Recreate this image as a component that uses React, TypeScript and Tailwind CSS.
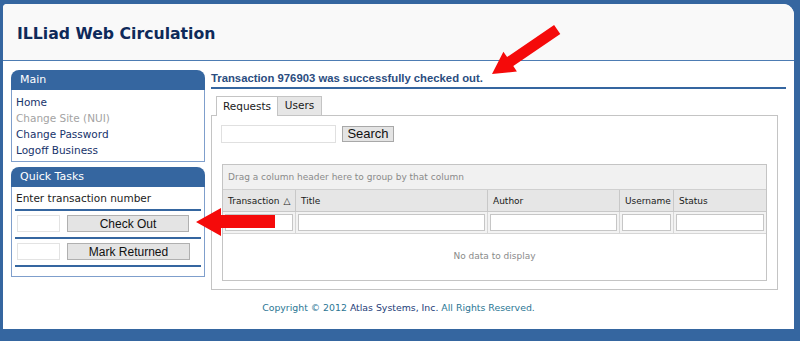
import React from "react";

const verdana = "font-['DejaVu_Sans',Verdana,sans-serif]";
const arial = "font-['Liberation_Sans',Arial,sans-serif]";

const Arrows = () => (
  <svg className="absolute left-0 top-0 pointer-events-none" width="800" height="341" viewBox="0 0 800 341">
    <polygon
      fill="#f50a0a"
      points="492,74 516.9,71.5 513.3,66.1 560.3,33.9 554.1,24.9 507.1,57.1 503.4,51.7"
    />
    <polygon fill="#f50a0a" points="196,222 221,208 221,215 275,215 275,228 221,228 221,236" />
  </svg>
);

const Sidebar = () => (
  <div className="w-[194px] flex flex-col">
    <div className="h-[20px] rounded-t-[8px] bg-[#3566a0] text-white text-[11px] leading-[20px] pl-[9px]">Main</div>
    <div className="border border-t-0 border-[#7f9fcc] pt-[4px] pb-[3px] pl-[4px] text-[10.5px] leading-[16px] text-[#17336b]">
      <div>Home</div>
      <div className="text-[#a3a3a3]">Change Site (NUI)</div>
      <div>Change Password</div>
      <div>Logoff Business</div>
    </div>

    <div className="mt-[5px] h-[20px] rounded-t-[8px] bg-[#3566a0] text-white text-[11px] leading-[20px] pl-[9px]">Quick Tasks</div>
    <div className="border border-t-0 border-[#7f9fcc] pt-[3px] pb-[9px] px-[3px] text-[10.5px] text-[#222]">
      <div className="leading-[16px] pl-[1px]">Enter transaction number</div>
      <div className="mt-[3px] h-[2px] bg-[#3566a0]"></div>
      <div className="flex items-center gap-[7px] mt-[4px] pl-[2px]">
        <div className="w-[43px] h-[17px] border border-[#e3e3e3] bg-white"></div>
        <button className={`${arial} w-[122px] h-[17px] border border-[#b0b0b0] bg-[#e4e4e4] text-[12px] leading-[14px] text-[#111]`}>Check Out</button>
      </div>
      <div className="mt-[5px] h-[2px] bg-[#3566a0]"></div>
      <div className="flex items-center gap-[7px] mt-[4px] pl-[2px]">
        <div className="w-[43px] h-[17px] border border-[#e3e3e3] bg-white"></div>
        <button className={`${arial} w-[123px] h-[17px] border border-[#b0b0b0] bg-[#e4e4e4] text-[12px] leading-[14px] text-[#111]`}>Mark Returned</button>
      </div>
      <div className="mt-[5px] h-[2px] bg-[#3566a0]"></div>
    </div>
  </div>
);

const cols = [
  { name: "Transaction", w: "w-[73px]", sort: true },
  { name: "Title", w: "w-[192px]" },
  { name: "Author", w: "w-[132px]" },
  { name: "Username", w: "w-[54px]" },
  { name: "Status", w: "flex-1" },
];

const Grid = () => (
  <div className="mt-[21px] mx-[10px] border border-[#c4c4c4] bg-white">
    <div className="h-[25px] bg-[#f1f1f1] border-b border-[#d0d0d0] text-[9px] leading-[25px] pl-[5px] text-[#8a8a8a]">
      Drag a column header here to group by that column
    </div>
    <div className="flex h-[22px] bg-[#e6e6e6] border-b border-[#c8c8c8] text-[9px] text-[#1a1a1a]">
      {cols.map((c, i) => (
        <div key={c.name} className={`${c.w} ${i < cols.length - 1 ? "border-r border-[#c8c8c8]" : ""} pl-[5px] leading-[22px] whitespace-nowrap`}>
          {c.name}
          {c.sort && <span className="ml-[4px] text-[9px]">△</span>}
        </div>
      ))}
    </div>
    <div className="flex h-[22px] bg-[#f3f3f3] border-b border-[#d6d6d6]">
      {cols.map((c, i) => (
        <div key={c.name} className={`${c.w} ${i < cols.length - 1 ? "border-r border-[#d6d6d6]" : ""} px-[2px] py-[2px]`}>
          <div className="h-full border border-[#c6c6c6] bg-white"></div>
        </div>
      ))}
    </div>
    <div className="h-[46px] flex items-center justify-center text-[9px] text-[#8a8a8a]">No data to display</div>
  </div>
);

const Content = () => (
  <div className="w-[575px]">
    <div className={`${arial} font-bold text-[11.3px] leading-[16px] text-[#2b4d80] border-b-2 border-[#3566a0] pb-[1px]`}>
      Transaction 976903 was successfully checked out.
    </div>
    <div className="w-[567px] mt-[6px]">
      <div className="flex items-end pl-[5px] h-[20px] text-[10.5px] text-[#1a1a1a]">
        <div className="w-[62px] h-[20px] border border-b-0 border-[#c4c4c4] bg-white flex items-center justify-center relative top-[1px]">Requests</div>
        <div className="w-[44px] h-[19px] border border-b-0 border-l-0 border-[#c4c4c4] bg-[#e6e6e6] flex items-center justify-center">Users</div>
      </div>
      <div className="border border-[#c4c4c4] h-[175px] pt-[9px] bg-white">
        <div className="flex items-center pl-[9px] gap-[6px]">
          <div className="w-[115px] h-[18px] border border-[#e0e0e0] bg-white"></div>
          <button className={`${arial} w-[52px] h-[16px] border border-[#a8a8a8] bg-[#e4e4e4] text-[13px] leading-[14px] text-[#111]`}>Search</button>
        </div>
        <Grid />
      </div>
    </div>
  </div>
);

export default function App() {
  return (
    <div className={`${verdana} relative w-[800px] h-[341px] bg-[#3566a0] overflow-hidden pt-[4px] pl-[3px]`}>
      <div className="w-[791px] h-[325px] bg-white rounded-tl-[4px] rounded-tr-[11px] overflow-hidden">
        <div className="h-[57px] bg-[#f9f9f9] border-b border-[#4d7cb3] flex items-center pl-[14px] pt-[3px]">
          <h1 className="text-[15.7px] font-bold text-[#0e2a5a]">ILLiad Web Circulation</h1>
        </div>
        <div className="flex pl-[8px] gap-[6px] pt-[9px]">
          <Sidebar />
          <Content />
        </div>
        <div className="text-center text-[9.35px] leading-[14px] mt-[11px] text-[#2a7694]">
          Copyright © 2012 <span className="text-[#1d3c78]">Atlas Systems, Inc.</span> All Rights Reserved.
        </div>
      </div>
      <Arrows />
    </div>
  );
}
